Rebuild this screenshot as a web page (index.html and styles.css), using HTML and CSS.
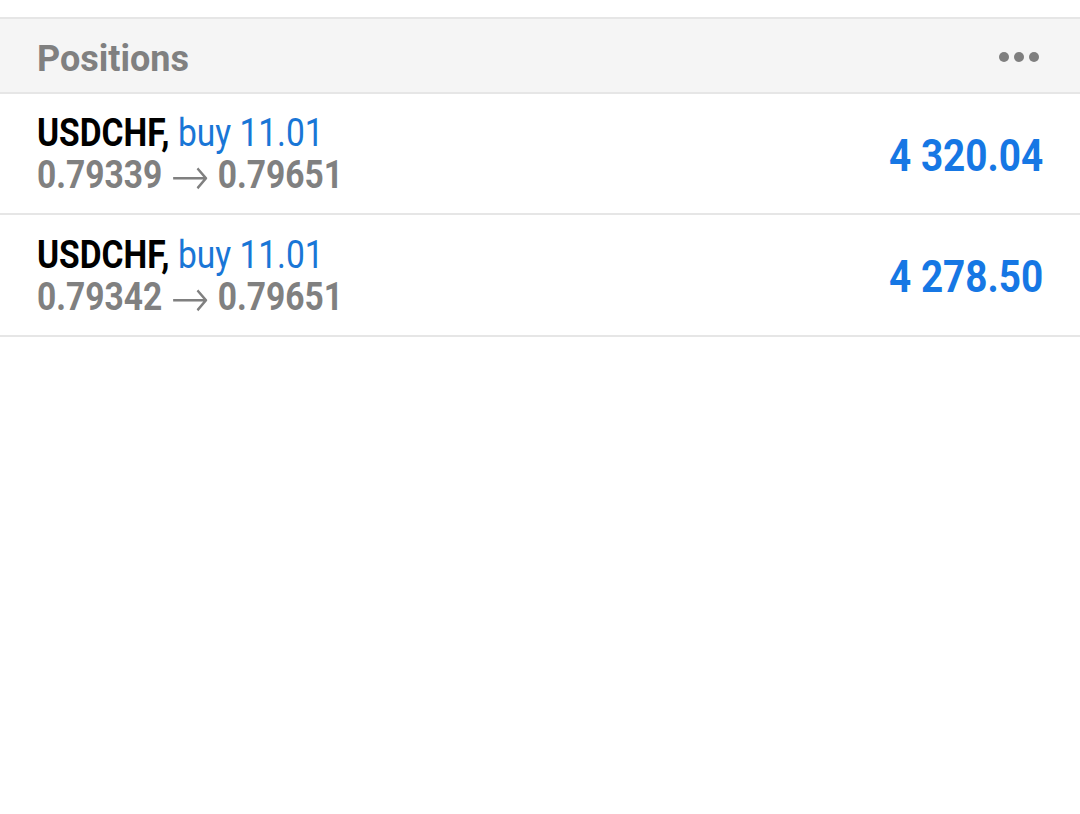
FILE: index.html
```html
<!DOCTYPE html>
<html>
<head>
<meta charset="utf-8">
<link rel="stylesheet" href="styles.css">
</head>
<body>
<section class="panel">
  <header class="head">
    <h2 class="title">Positions</h2>
    <span class="dots"><i></i><i></i><i></i></span>
  </header>
  <ul class="list">
    <li class="row">
      <div class="info">
        <div class="l1"><b class="sym">USDCHF,</b> <span class="side">buy 11.01</span></div>
        <div class="l2">0.79339 <span class="arrow">→</span> 0.79651</div>
      </div>
      <div class="profit">4 320.04</div>
    </li>
    <li class="row">
      <div class="info">
        <div class="l1"><b class="sym">USDCHF,</b> <span class="side">buy 11.01</span></div>
        <div class="l2">0.79342 <span class="arrow">→</span> 0.79651</div>
      </div>
      <div class="profit">4 278.50</div>
    </li>
  </ul>
</section>
</body>
</html>
```
FILE: styles.css
```css
html, body {
  margin: 0;
  padding: 0;
  background: #ffffff;
  font-family: Roboto, "Liberation Sans", sans-serif;
}
body {
  padding-top: 17px;
}
.panel {
  display: flex;
  flex-direction: column;
}
.head {
  height: 73px;
  box-sizing: content-box;
  border-top: 2px solid #e6e6e6;
  border-bottom: 2px solid #e6e6e6;
  background: #f5f5f5;
  display: flex;
  align-items: center;
  justify-content: space-between;
  padding: 0 37px;
}
.title {
  margin: 0;
  font-size: 36px;
  font-weight: 700;
  color: #808080;
  line-height: 1;
  padding-top: 6px;
}
.dots {
  display: flex;
  gap: 5px;
  margin-right: 4px;
  margin-top: 3px;
}
.dots i {
  width: 10px;
  height: 10px;
  border-radius: 50%;
  background: #7f7f7f;
}
.list {
  list-style: none;
  margin: 0;
  padding: 0;
}
.row {
  height: 119px;
  border-bottom: 2px solid #e6e6e6;
  display: flex;
  align-items: center;
  justify-content: space-between;
  padding: 0 37px;
}
.row + .row {
  height: 120px;
}
.info {
  transform: scaleX(0.86);
  transform-origin: left center;
  white-space: nowrap;
  margin-top: 3px;
}
.l1 {
  font-size: 39px;
  line-height: 36px;
}
.sym {
  font-weight: 700;
  color: #000000;
}
.side {
  font-weight: 400;
  color: #1976d6;
}
.l2 {
  font-size: 39px;
  line-height: 36px;
  margin-top: 6px;
  font-weight: 700;
  color: #808080;
}
.arrow {
  display: inline-block;
  font-family: "DejaVu Sans", sans-serif;
  font-weight: 200;
  font-size: 54px;
  line-height: 36px;
  height: 36px;
  vertical-align: top;
  margin-top: 2px;
}
.profit {
  font-size: 45px;
  font-weight: 700;
  color: #1677e4;
  transform: scaleX(0.86);
  transform-origin: right center;
  white-space: nowrap;
  margin-top: 3px;
}
```
